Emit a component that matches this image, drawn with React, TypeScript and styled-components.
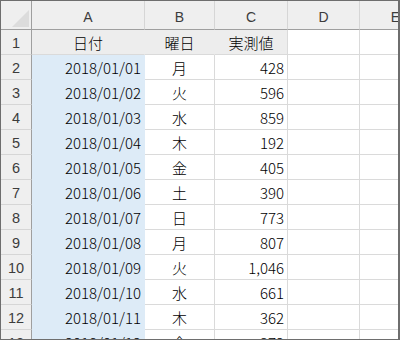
import styled, { createGlobalStyle } from 'styled-components';

type Row = { date: string; day: string; value: string };

const rows: Row[] = [
  { date: '2018/01/01', day: '月', value: '428' },
  { date: '2018/01/02', day: '火', value: '596' },
  { date: '2018/01/03', day: '水', value: '859' },
  { date: '2018/01/04', day: '木', value: '192' },
  { date: '2018/01/05', day: '金', value: '405' },
  { date: '2018/01/06', day: '土', value: '390' },
  { date: '2018/01/07', day: '日', value: '773' },
  { date: '2018/01/08', day: '月', value: '807' },
  { date: '2018/01/09', day: '火', value: '1,046' },
  { date: '2018/01/10', day: '水', value: '661' },
  { date: '2018/01/11', day: '木', value: '362' },
  { date: '2018/01/12', day: '金', value: '372' },
];

const columns = ['A', 'B', 'C', 'D', 'E'];

const GRID = '#dadada';
const HEAD_BG = '#efefef';
const HEAD_LINE = '#9f9f9f';
const BLUE = '#ddebf7';
const TITLE_BG = '#ededed';

const GlobalStyle = createGlobalStyle`
  html, body {
    margin: 0;
    padding: 0;
    background: #fff;
  }
`;

const Frame = styled.div`
  width: 400px;
  height: 340px;
  box-sizing: border-box;
  border: 1px solid #6e6e6e;
  border-right-width: 2px;
  overflow: hidden;
  font-family: "Noto Sans CJK JP", "Noto Sans", sans-serif;
`;

const Sheet = styled.div`
  display: grid;
  grid-template-columns: 31px 113px 70px 73px 72px 72px;
  grid-template-rows: 29px;
  grid-auto-rows: 25px;
`;

const Corner = styled.div`
  box-sizing: border-box;
  background: ${HEAD_BG};
  border-right: 1px solid ${HEAD_LINE};
  border-bottom: 1px solid ${HEAD_LINE};
  display: flex;
  align-items: flex-end;
  justify-content: flex-end;
  padding: 0 2px 2px 0;
`;

const ColHead = styled.div`
  box-sizing: border-box;
  background: ${HEAD_BG};
  border-right: 1px solid #d6d6d6;
  border-bottom: 1px solid ${HEAD_LINE};
  display: flex;
  align-items: center;
  justify-content: center;
  padding-top: 4px;
  font-family: "Liberation Sans", "Noto Sans", sans-serif;
  font-size: 14px;
  color: #3c3c3c;
`;

const RowHead = styled.div`
  box-sizing: border-box;
  background: ${HEAD_BG};
  border-right: 1px solid ${HEAD_LINE};
  border-bottom: 1px solid #d6d6d6;
  display: flex;
  align-items: center;
  justify-content: center;
  padding-top: 1px;
  font-family: "Liberation Sans", "Noto Sans", sans-serif;
  font-size: 14.5px;
  color: #3c3c3c;
`;

const Cell = styled.div<{ $align?: 'left' | 'center' | 'right'; $fill?: string; $joinRight?: boolean }>`
  box-sizing: border-box;
  background: ${(p) => p.$fill || '#fff'};
  border-right: 1px solid ${(p) => (p.$joinRight && p.$fill ? p.$fill : GRID)};
  border-bottom: 1px solid ${(p) => (p.$fill === BLUE ? BLUE : GRID)};
  display: flex;
  align-items: center;
  justify-content: ${(p) => (p.$align === 'right' ? 'flex-end' : p.$align === 'center' ? 'center' : 'flex-start')};
  padding: 1px 3px 0 3px;
  font-size: 15px;
  font-weight: 300;
  color: #000;
  white-space: nowrap;
  overflow: hidden;
`;

const Triangle = () => (
  <svg width="17" height="17" viewBox="0 0 17 17">
    <polygon points="17,0 17,17 0,17" fill="#dcdcdc" />
  </svg>
);

export default function App() {
  return (
    <>
      <GlobalStyle />
      <Frame>
        <Sheet>
          <Corner>
            <Triangle />
          </Corner>
          {columns.map((c) => (
            <ColHead key={c}>{c}</ColHead>
          ))}

          <RowHead>1</RowHead>
          <Cell $align="center" $fill={TITLE_BG} $joinRight>日付</Cell>
          <Cell $align="center" $fill={TITLE_BG} $joinRight>曜日</Cell>
          <Cell $align="center" $fill={TITLE_BG}>実測値</Cell>
          <Cell />
          <Cell />

          {rows.map((r, i) => (
            <Row key={r.date} index={i + 2} row={r} />
          ))}
        </Sheet>
      </Frame>
    </>
  );
}

const Row = ({ index, row }: { index: number; row: Row }) => (
  <>
    <RowHead>{index}</RowHead>
    <Cell $align="right" $fill={BLUE} $joinRight>{row.date}</Cell>
    <Cell $align="center">{row.day}</Cell>
    <Cell $align="right">{row.value}</Cell>
    <Cell />
    <Cell />
  </>
);
